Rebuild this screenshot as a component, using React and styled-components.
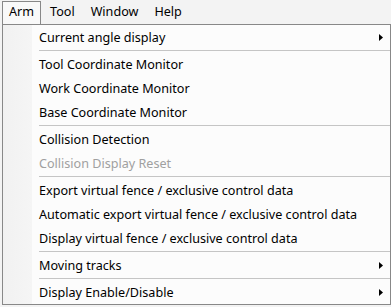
import React from 'react'
import styled, { createGlobalStyle } from 'styled-components'

const GlobalStyle = createGlobalStyle`
    html, body {
        margin: 0;
        padding: 0;
        background: #f3f3f3;
    }
    body {
        font-family: "Noto Sans", "DejaVu Sans", sans-serif;
        font-size: 12.6px;
        color: #000;
    }
`

const menuBar = ['Arm', 'Tool', 'Window', 'Help']

const menuGroups = [
    [{ title: 'Current angle display', sub: true }],
    [
        { title: 'Tool Coordinate Monitor' },
        { title: 'Work Coordinate Monitor' },
        { title: 'Base Coordinate Monitor' },
    ],
    [
        { title: 'Collision Detection' },
        { title: 'Collision Display Reset', disabled: true },
    ],
    [
        { title: 'Export virtual fence / exclusive control data' },
        { title: 'Automatic export virtual fence / exclusive control data' },
        { title: 'Display virtual fence / exclusive control data' },
    ],
    [{ title: 'Moving tracks', sub: true }],
    [{ title: 'Display Enable/Disable', sub: true }],
]

const Arrow = () => (
    <svg width="4" height="7" viewBox="0 0 4 7">
        <path d="M0 0 L4 3.5 L0 7 Z" fill="#000" />
    </svg>
)

const App = () => {
    return (
        <Screen>
            <GlobalStyle />
            <MenuBar>
                {menuBar.map((name, i) => (
                    <BarItem key={name} $open={i === 0}>{name}</BarItem>
                ))}
            </MenuBar>
            <Dropdown>
                {menuGroups.map((group, gi) => (
                    <React.Fragment key={gi}>
                        {gi > 0 && <Separator />}
                        {group.map(item => (
                            <Item key={item.title} $disabled={item.disabled}>
                                <Gutter />
                                <Label>{item.title}</Label>
                                <SubArrow>{item.sub && <Arrow />}</SubArrow>
                            </Item>
                        ))}
                    </React.Fragment>
                ))}
            </Dropdown>
        </Screen>
    )
}

const Screen = styled.div`
    width: 391px;
    height: 307px;
    overflow: hidden;
    background: #f3f3f3;
`

const MenuBar = styled.div`
    height: 24px;
    display: flex;
    align-items: flex-end;
    padding-left: 2px;
`

const BarItem = styled.div`
    height: 23px;
    box-sizing: border-box;
    padding: 0 6px 1px 6px;
    display: flex;
    align-items: center;
    border: 1px solid ${p => p.$open ? '#888' : 'transparent'};
    border-bottom: none;
    background: ${p => p.$open ? '#f9f9f9' : 'transparent'};
    margin-right: 2px;
    line-height: 1;
`

const Dropdown = styled.div`
    margin-left: 2px;
    width: 389px;
    box-sizing: border-box;
    border: 1px solid #888;
    background: #fcfcfc;
    display: flex;
    flex-direction: column;
    position: relative;
    &::before {
        content: '';
        position: absolute;
        left: 0;
        top: 0;
        bottom: 0;
        width: 29px;
        background: linear-gradient(90deg, #f1f1f1, #f5f5f5);
    }
`

const Item = styled.div`
    height: 24px;
    display: flex;
    align-items: center;
    position: relative;
    color: ${p => p.$disabled ? '#a0a0a0' : '#000'};
`

const Gutter = styled.div`
    width: 36px;
    flex: none;
`

const Label = styled.span`
    flex: 1;
    white-space: nowrap;
`

const SubArrow = styled.div`
    width: 4px;
    flex: none;
    display: flex;
    align-items: center;
    margin-right: 7px;
`

const Separator = styled.div`
    height: 3px;
    display: flex;
    align-items: center;
    margin-left: 36px;
    &::after {
        content: '';
        flex: 1;
        height: 1px;
        background: #c5c5c5;
    }
`

export default App
